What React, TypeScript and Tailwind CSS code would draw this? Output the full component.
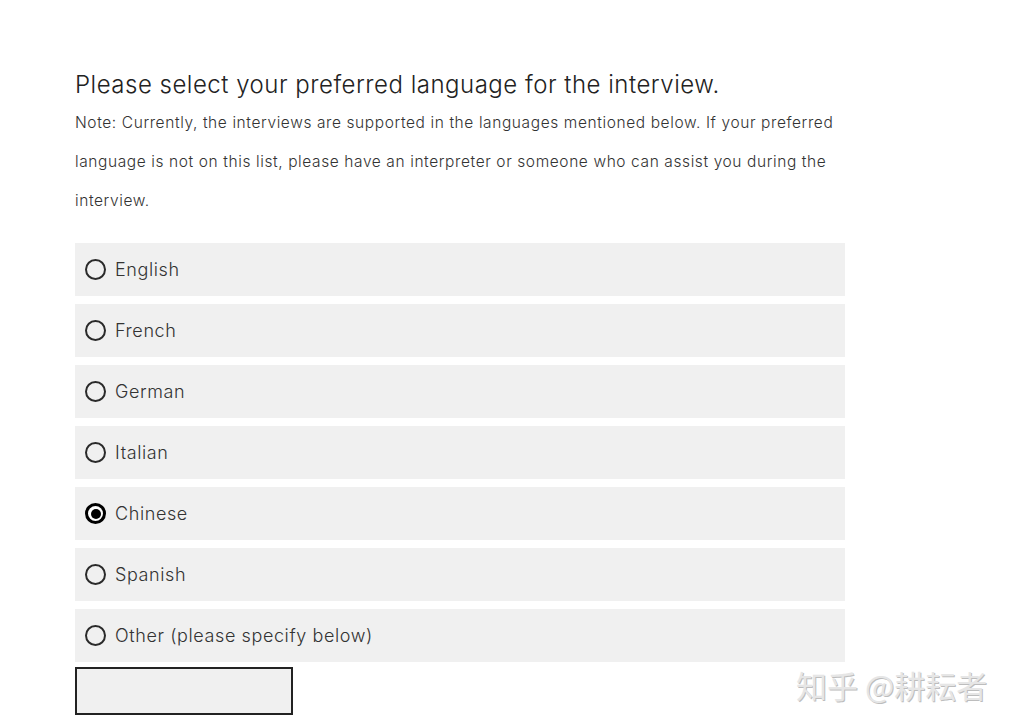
import React from "react";

const langs = ["English", "French", "German", "Italian", "Chinese", "Spanish", "Other (please specify below)"];

export default function App() {
  return (
    <div className="relative w-[1010px] h-[724px] bg-white overflow-hidden" style={{ fontFamily: "Inter, 'Noto Sans', sans-serif" }}>
      <div className="pl-[75px] pt-[68px] w-[845px]">
        <h1 className="text-[24px] leading-[34px] font-light text-[#222] tracking-[0.5px]">
          Please select your preferred language for the interview.
        </h1>
        <p className="mt-[1px] text-[15.5px] leading-[39px] font-light text-[#333] tracking-[0.6px]">
          Note: Currently, the interviews are supported in the languages mentioned below. If your preferred
          <br />
          language is not on this list, please have an interpreter or someone who can assist you during the
          <br />
          interview.
        </p>
        <div className="mt-[23px] flex flex-col gap-[8px]">
          {langs.map((l) =>
            <div key={l} className="h-[53px] bg-[#f0f0f0] flex items-center pl-[10px]">
              {l === "Chinese" ? (
                <span className="w-[21px] h-[21px] rounded-full border-[3px] border-black bg-white flex items-center justify-center">
                  <span className="w-[10px] h-[10px] rounded-full bg-black" />
                </span>
              ) : (
                <span className="w-[21px] h-[21px] rounded-full border-2 border-[#2a2a2a]" />
              )}
              <span className="ml-[9px] text-[18px] font-light text-[#333] tracking-[0.6px]">{l}</span>
            </div>
          )}
        </div>
        <div className="mt-[5px] w-[218px] h-[48px] border-2 border-[#222] bg-[#f0f0f0]" />
      </div>
      <div
        className="absolute left-[796px] top-[662px] text-[31px] text-[#e6e6e6]"
        style={{ fontFamily: "'Noto Sans CJK SC', sans-serif", textShadow: "1px 1px 0 #bdbdbd" }}
      >
        知乎 @耕耘者
      </div>
    </div>
  );
}
